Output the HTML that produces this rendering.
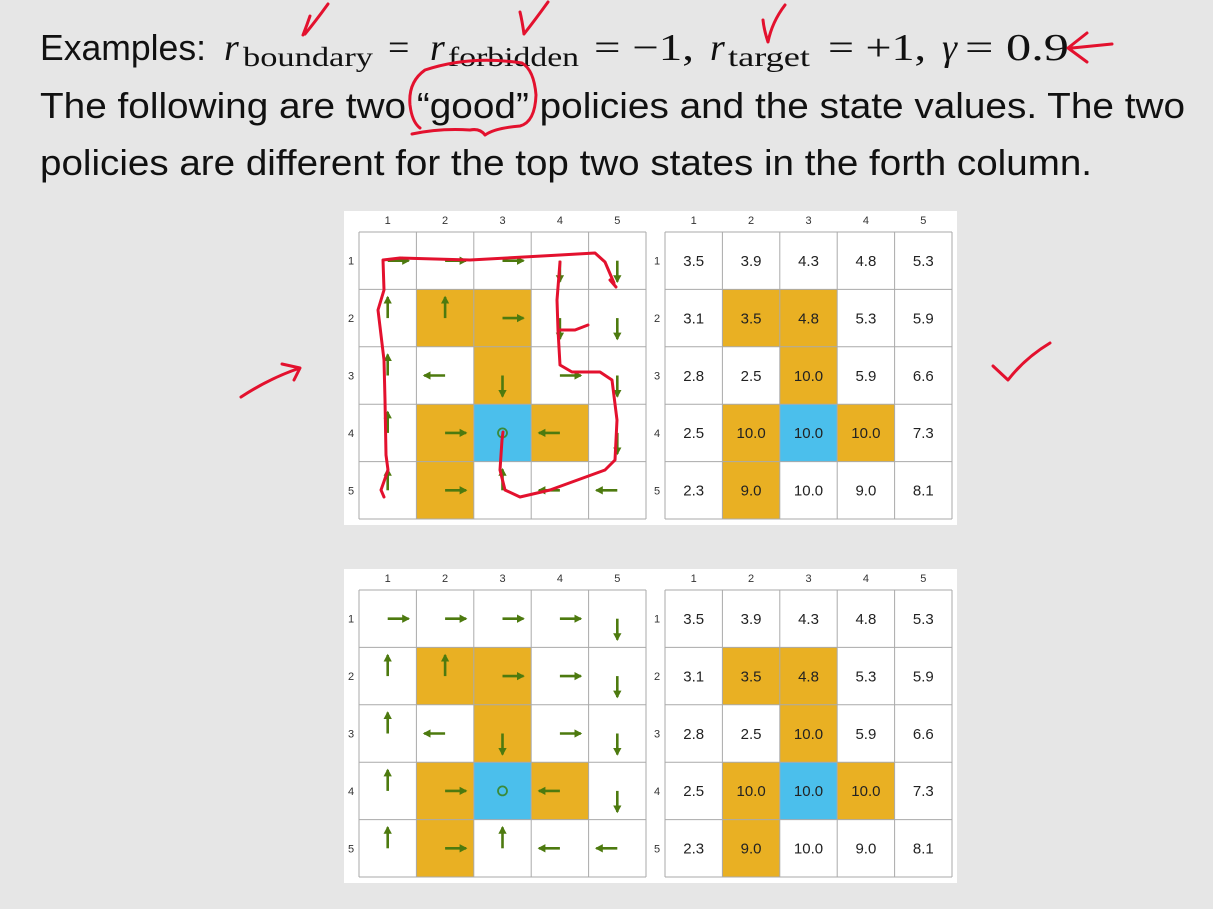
<!DOCTYPE html>
<html><head><meta charset="utf-8"><style>
html,body{margin:0;padding:0;background:#e6e6e6;}
svg{display:block}
.t{font-family:"Liberation Sans",sans-serif;font-size:36px;fill:#111}
.m{font-family:"Liberation Serif",serif;font-size:38px;fill:#111}
.s{font-family:"Liberation Serif",serif;font-size:27px;fill:#111}
.lab{font-family:"Liberation Sans",sans-serif;font-size:11px;fill:#333;text-anchor:middle}
.v{font-family:"Liberation Sans",sans-serif;font-size:15px;fill:#222;text-anchor:middle}
.a path{stroke:#4d7a0f;stroke-width:2.6;fill:none;marker-end:url(#ah)}
.g{stroke:#aaa;stroke-width:1;fill:none}
.r{stroke:#e3112e;stroke-width:3;fill:none;stroke-linecap:round;stroke-linejoin:round}
</style></head><body>
<svg width="1213" height="909" viewBox="0 0 1213 909" xmlns="http://www.w3.org/2000/svg">
<defs>
<marker id="ah" markerWidth="4" markerHeight="4" refX="2.5" refY="2" orient="auto" markerUnits="strokeWidth"><path d="M0,0.4 L3,2 L0,3.6 Z" fill="#4d7a0f"/></marker>
</defs>
<rect width="1213" height="909" fill="#e6e6e6"/>
<text class="t" x="40" y="60" textLength="166" lengthAdjust="spacingAndGlyphs">Examples:</text>
<text class="m" x="224" y="60" font-style="italic">r</text>
<text class="s" x="243" y="66" textLength="130" lengthAdjust="spacingAndGlyphs">boundary</text>
<text class="m" x="388" y="60">=</text>
<text class="m" x="430" y="60" font-style="italic">r</text>
<text class="s" x="448" y="66" textLength="131" lengthAdjust="spacingAndGlyphs">forbidden</text>
<text class="m" x="594" y="60" textLength="100" lengthAdjust="spacingAndGlyphs">= −1,</text>
<text class="m" x="710" y="60" font-style="italic">r</text>
<text class="s" x="728" y="66" textLength="82" lengthAdjust="spacingAndGlyphs">target</text>
<text class="m" x="828" y="60" textLength="98" lengthAdjust="spacingAndGlyphs">= +1,</text>
<text class="m" x="942" y="60" font-style="italic">γ</text>
<text class="m" x="965" y="60" textLength="104" lengthAdjust="spacingAndGlyphs">= 0.9</text>
<text class="t" x="40" y="118" textLength="1145" lengthAdjust="spacingAndGlyphs">The following are two “good” policies and the state values.  The two</text>
<text class="t" x="40" y="175" textLength="1052" lengthAdjust="spacingAndGlyphs">policies are different for the top two states in the forth column.</text>

<!-- TOP PANEL -->
<g transform="translate(344,211)">
<rect width="613" height="314" fill="#fff"/>
<rect x="72.4" y="78.4" width="57.4" height="57.4" fill="#e9b023"/><rect x="129.8" y="78.4" width="57.4" height="57.4" fill="#e9b023"/><rect x="129.8" y="135.8" width="57.4" height="57.4" fill="#e9b023"/><rect x="72.4" y="193.2" width="57.4" height="57.4" fill="#e9b023"/><rect x="187.2" y="193.2" width="57.4" height="57.4" fill="#e9b023"/><rect x="72.4" y="250.6" width="57.4" height="57.4" fill="#e9b023"/><rect x="129.8" y="193.2" width="57.4" height="57.4" fill="#4bbfec"/>
<rect x="378.4" y="78.4" width="57.4" height="57.4" fill="#e9b023"/><rect x="435.8" y="78.4" width="57.4" height="57.4" fill="#e9b023"/><rect x="435.8" y="135.8" width="57.4" height="57.4" fill="#e9b023"/><rect x="378.4" y="193.2" width="57.4" height="57.4" fill="#e9b023"/><rect x="493.2" y="193.2" width="57.4" height="57.4" fill="#e9b023"/><rect x="378.4" y="250.6" width="57.4" height="57.4" fill="#e9b023"/><rect x="435.8" y="193.2" width="57.4" height="57.4" fill="#4bbfec"/>
<path class="g" d="M15,21H302M15,78.4H302M15,135.8H302M15,193.2H302M15,250.6H302M15,308H302M15,21V308M72.4,21V308M129.8,21V308M187.2,21V308M244.6,21V308M302,21V308"/>
<path class="g" d="M321,21H608M321,78.4H608M321,135.8H608M321,193.2H608M321,250.6H608M321,308H608M321,21V308M378.4,21V308M435.8,21V308M493.2,21V308M550.6,21V308M608,21V308"/>
<text class="lab" x="43.7" y="13">1</text><text class="lab" x="101.1" y="13">2</text><text class="lab" x="158.5" y="13">3</text><text class="lab" x="215.9" y="13">4</text><text class="lab" x="273.3" y="13">5</text>
<text class="lab" x="349.7" y="13">1</text><text class="lab" x="407.1" y="13">2</text><text class="lab" x="464.5" y="13">3</text><text class="lab" x="521.9" y="13">4</text><text class="lab" x="579.3" y="13">5</text>
<text class="lab" x="7" y="53.7">1</text><text class="lab" x="7" y="111.1">2</text><text class="lab" x="7" y="168.5">3</text><text class="lab" x="7" y="225.9">4</text><text class="lab" x="7" y="283.3">5</text>
<text class="lab" x="313" y="53.7">1</text><text class="lab" x="313" y="111.1">2</text><text class="lab" x="313" y="168.5">3</text><text class="lab" x="313" y="225.9">4</text><text class="lab" x="313" y="283.3">5</text>
<g class="a">
<path d="M43.7,49.7h21"/><path d="M101.1,49.7h21"/><path d="M158.5,49.7h21"/><path d="M215.9,49.7v21"/><path d="M273.3,49.7v21"/>
<path d="M43.7,107.1v-21"/><path d="M101.1,107.1v-21"/><path d="M158.5,107.1h21"/><path d="M215.9,107.1v21"/><path d="M273.3,107.1v21"/>
<path d="M43.7,164.5v-21"/><path d="M101.1,164.5h-21"/><path d="M158.5,164.5v21"/><path d="M215.9,164.5h21"/><path d="M273.3,164.5v21"/>
<path d="M43.7,221.9v-21"/><path d="M101.1,221.9h21"/><path d="M215.9,221.9h-21"/><path d="M273.3,221.9v21"/>
<path d="M43.7,279.3v-21"/><path d="M101.1,279.3h21"/><path d="M158.5,279.3v-21"/><path d="M215.9,279.3h-21"/><path d="M273.3,279.3h-21"/>
</g>
<circle cx="158.5" cy="221.9" r="4.5" fill="none" stroke="#3a8a3a" stroke-width="1.8"/>
<text class="v" x="349.7" y="55">3.5</text><text class="v" x="407.1" y="55">3.9</text><text class="v" x="464.5" y="55">4.3</text><text class="v" x="521.9" y="55">4.8</text><text class="v" x="579.3" y="55">5.3</text>
<text class="v" x="349.7" y="112.4">3.1</text><text class="v" x="407.1" y="112.4">3.5</text><text class="v" x="464.5" y="112.4">4.8</text><text class="v" x="521.9" y="112.4">5.3</text><text class="v" x="579.3" y="112.4">5.9</text>
<text class="v" x="349.7" y="169.8">2.8</text><text class="v" x="407.1" y="169.8">2.5</text><text class="v" x="464.5" y="169.8">10.0</text><text class="v" x="521.9" y="169.8">5.9</text><text class="v" x="579.3" y="169.8">6.6</text>
<text class="v" x="349.7" y="227.2">2.5</text><text class="v" x="407.1" y="227.2">10.0</text><text class="v" x="464.5" y="227.2">10.0</text><text class="v" x="521.9" y="227.2">10.0</text><text class="v" x="579.3" y="227.2">7.3</text>
<text class="v" x="349.7" y="284.6">2.3</text><text class="v" x="407.1" y="284.6">9.0</text><text class="v" x="464.5" y="284.6">10.0</text><text class="v" x="521.9" y="284.6">9.0</text><text class="v" x="579.3" y="284.6">8.1</text>
</g>

<!-- BOTTOM PANEL -->
<g transform="translate(344,569)">
<rect width="613" height="314" fill="#fff"/>
<rect x="72.4" y="78.4" width="57.4" height="57.4" fill="#e9b023"/><rect x="129.8" y="78.4" width="57.4" height="57.4" fill="#e9b023"/><rect x="129.8" y="135.8" width="57.4" height="57.4" fill="#e9b023"/><rect x="72.4" y="193.2" width="57.4" height="57.4" fill="#e9b023"/><rect x="187.2" y="193.2" width="57.4" height="57.4" fill="#e9b023"/><rect x="72.4" y="250.6" width="57.4" height="57.4" fill="#e9b023"/><rect x="129.8" y="193.2" width="57.4" height="57.4" fill="#4bbfec"/>
<rect x="378.4" y="78.4" width="57.4" height="57.4" fill="#e9b023"/><rect x="435.8" y="78.4" width="57.4" height="57.4" fill="#e9b023"/><rect x="435.8" y="135.8" width="57.4" height="57.4" fill="#e9b023"/><rect x="378.4" y="193.2" width="57.4" height="57.4" fill="#e9b023"/><rect x="493.2" y="193.2" width="57.4" height="57.4" fill="#e9b023"/><rect x="378.4" y="250.6" width="57.4" height="57.4" fill="#e9b023"/><rect x="435.8" y="193.2" width="57.4" height="57.4" fill="#4bbfec"/>
<path class="g" d="M15,21H302M15,78.4H302M15,135.8H302M15,193.2H302M15,250.6H302M15,308H302M15,21V308M72.4,21V308M129.8,21V308M187.2,21V308M244.6,21V308M302,21V308"/>
<path class="g" d="M321,21H608M321,78.4H608M321,135.8H608M321,193.2H608M321,250.6H608M321,308H608M321,21V308M378.4,21V308M435.8,21V308M493.2,21V308M550.6,21V308M608,21V308"/>
<text class="lab" x="43.7" y="13">1</text><text class="lab" x="101.1" y="13">2</text><text class="lab" x="158.5" y="13">3</text><text class="lab" x="215.9" y="13">4</text><text class="lab" x="273.3" y="13">5</text>
<text class="lab" x="349.7" y="13">1</text><text class="lab" x="407.1" y="13">2</text><text class="lab" x="464.5" y="13">3</text><text class="lab" x="521.9" y="13">4</text><text class="lab" x="579.3" y="13">5</text>
<text class="lab" x="7" y="53.7">1</text><text class="lab" x="7" y="111.1">2</text><text class="lab" x="7" y="168.5">3</text><text class="lab" x="7" y="225.9">4</text><text class="lab" x="7" y="283.3">5</text>
<text class="lab" x="313" y="53.7">1</text><text class="lab" x="313" y="111.1">2</text><text class="lab" x="313" y="168.5">3</text><text class="lab" x="313" y="225.9">4</text><text class="lab" x="313" y="283.3">5</text>
<g class="a">
<path d="M43.7,49.7h21"/><path d="M101.1,49.7h21"/><path d="M158.5,49.7h21"/><path d="M215.9,49.7h21"/><path d="M273.3,49.7v21"/>
<path d="M43.7,107.1v-21"/><path d="M101.1,107.1v-21"/><path d="M158.5,107.1h21"/><path d="M215.9,107.1h21"/><path d="M273.3,107.1v21"/>
<path d="M43.7,164.5v-21"/><path d="M101.1,164.5h-21"/><path d="M158.5,164.5v21"/><path d="M215.9,164.5h21"/><path d="M273.3,164.5v21"/>
<path d="M43.7,221.9v-21"/><path d="M101.1,221.9h21"/><path d="M215.9,221.9h-21"/><path d="M273.3,221.9v21"/>
<path d="M43.7,279.3v-21"/><path d="M101.1,279.3h21"/><path d="M158.5,279.3v-21"/><path d="M215.9,279.3h-21"/><path d="M273.3,279.3h-21"/>
</g>
<circle cx="158.5" cy="221.9" r="4.5" fill="none" stroke="#3a8a3a" stroke-width="1.8"/>
<text class="v" x="349.7" y="55">3.5</text><text class="v" x="407.1" y="55">3.9</text><text class="v" x="464.5" y="55">4.3</text><text class="v" x="521.9" y="55">4.8</text><text class="v" x="579.3" y="55">5.3</text>
<text class="v" x="349.7" y="112.4">3.1</text><text class="v" x="407.1" y="112.4">3.5</text><text class="v" x="464.5" y="112.4">4.8</text><text class="v" x="521.9" y="112.4">5.3</text><text class="v" x="579.3" y="112.4">5.9</text>
<text class="v" x="349.7" y="169.8">2.8</text><text class="v" x="407.1" y="169.8">2.5</text><text class="v" x="464.5" y="169.8">10.0</text><text class="v" x="521.9" y="169.8">5.9</text><text class="v" x="579.3" y="169.8">6.6</text>
<text class="v" x="349.7" y="227.2">2.5</text><text class="v" x="407.1" y="227.2">10.0</text><text class="v" x="464.5" y="227.2">10.0</text><text class="v" x="521.9" y="227.2">10.0</text><text class="v" x="579.3" y="227.2">7.3</text>
<text class="v" x="349.7" y="284.6">2.3</text><text class="v" x="407.1" y="284.6">9.0</text><text class="v" x="464.5" y="284.6">10.0</text><text class="v" x="521.9" y="284.6">9.0</text><text class="v" x="579.3" y="284.6">8.1</text>
</g>

<!-- red annotations -->
<path class="r" d="M303,35 Q307,25 310,16 M305,34 Q315,22 328,4"/>
<path class="r" d="M524,34 Q522,20 520,12 M524,34 Q535,20 548,2"/>
<path class="r" d="M768,42 Q764,30 763,20 M768,42 Q772,22 785,5"/>
<path class="r" d="M1112,44 L1072,48 M1087,33 L1068,48 L1087,62"/>
<path class="r" d="M412,134 Q440,128 470,130 Q480,128 485,135 Q495,128 520,126 Q535,122 536,95 Q534,70 522,63 Q470,55 425,70 Q408,82 410,105 Q412,122 420,128"/>
<path class="r" d="M384,497 L381,490 L388,470 L386,455 L385,400 L384,360 L378,310 L384,290 L383,260 L400,258 L470,260 L560,255 L595,253 L605,262 L614,283 M610,280 L616,287"/>
<path class="r" d="M560,262 L557,300 L558,330 L575,330 L588,325 M558,330 L560,365 L572,372 L600,372 L612,380 L617,420 L615,460 L605,470 L550,490 L520,497 L505,490 L500,470 L502,440 L503,432"/>
<path class="r" d="M993,366 L1008,380 Q1025,358 1050,343"/>
<path class="r" d="M241,397 Q270,378 300,368 M282,364 L300,368 L294,380"/>
</svg>
</body></html>
